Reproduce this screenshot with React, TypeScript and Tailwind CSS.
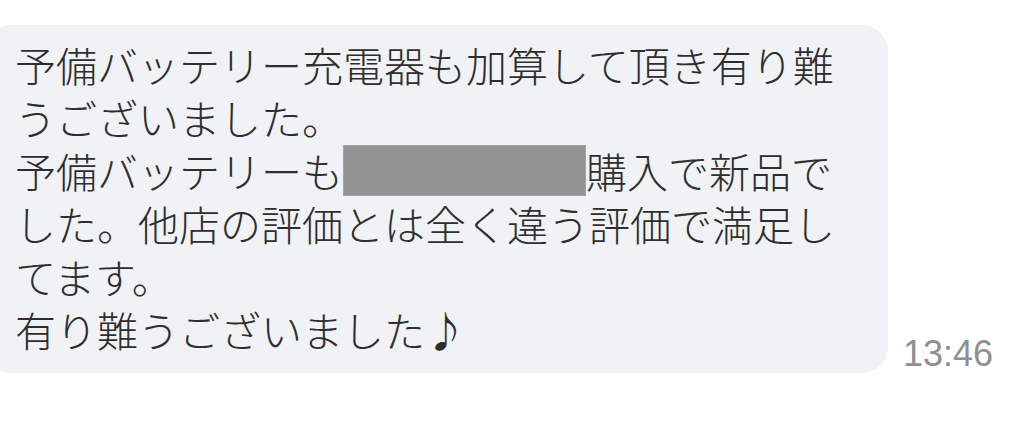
import React from "react";

const lines: React.ReactNode[] = [
  "予備バッテリー充電器も加算して頂き有り難",
  "うございました。",
  <>
    予備バッテリーも
    <span className="inline-block align-top w-[243px] h-[51px] mt-[1px] bg-[#939393] border border-[#a3a3a3]" />
    購入で新品で
  </>,
  "した。他店の評価とは全く違う評価で満足し",
  "てます。",
  "有り難うございました♪",
];

export default function App() {
  return (
    <div className="w-[1024px] h-[428px] overflow-hidden bg-white">
      <div className="flex items-end pt-[25px]">
        <div
          className="ml-[-15px] w-[903px] shrink-0 rounded-[26px] bg-[#f1f2f5] pl-[30px] pt-[13px] pb-[17px] text-[41px] font-light leading-[53px] text-[#2e2e2e] whitespace-nowrap"
          style={{ fontFamily: '"Noto Sans CJK JP", "Noto Sans", sans-serif' }}
        >
          {lines.map((l, i) => (
            <div key={i}>{l}</div>
          ))}
        </div>
        <div
          className="ml-[15px] mb-[1px] text-[36px] leading-none text-[#8e8e93]"
          style={{ fontFamily: '"Liberation Sans", Arial, sans-serif' }}
        >
          13:46
        </div>
      </div>
    </div>
  );
}
